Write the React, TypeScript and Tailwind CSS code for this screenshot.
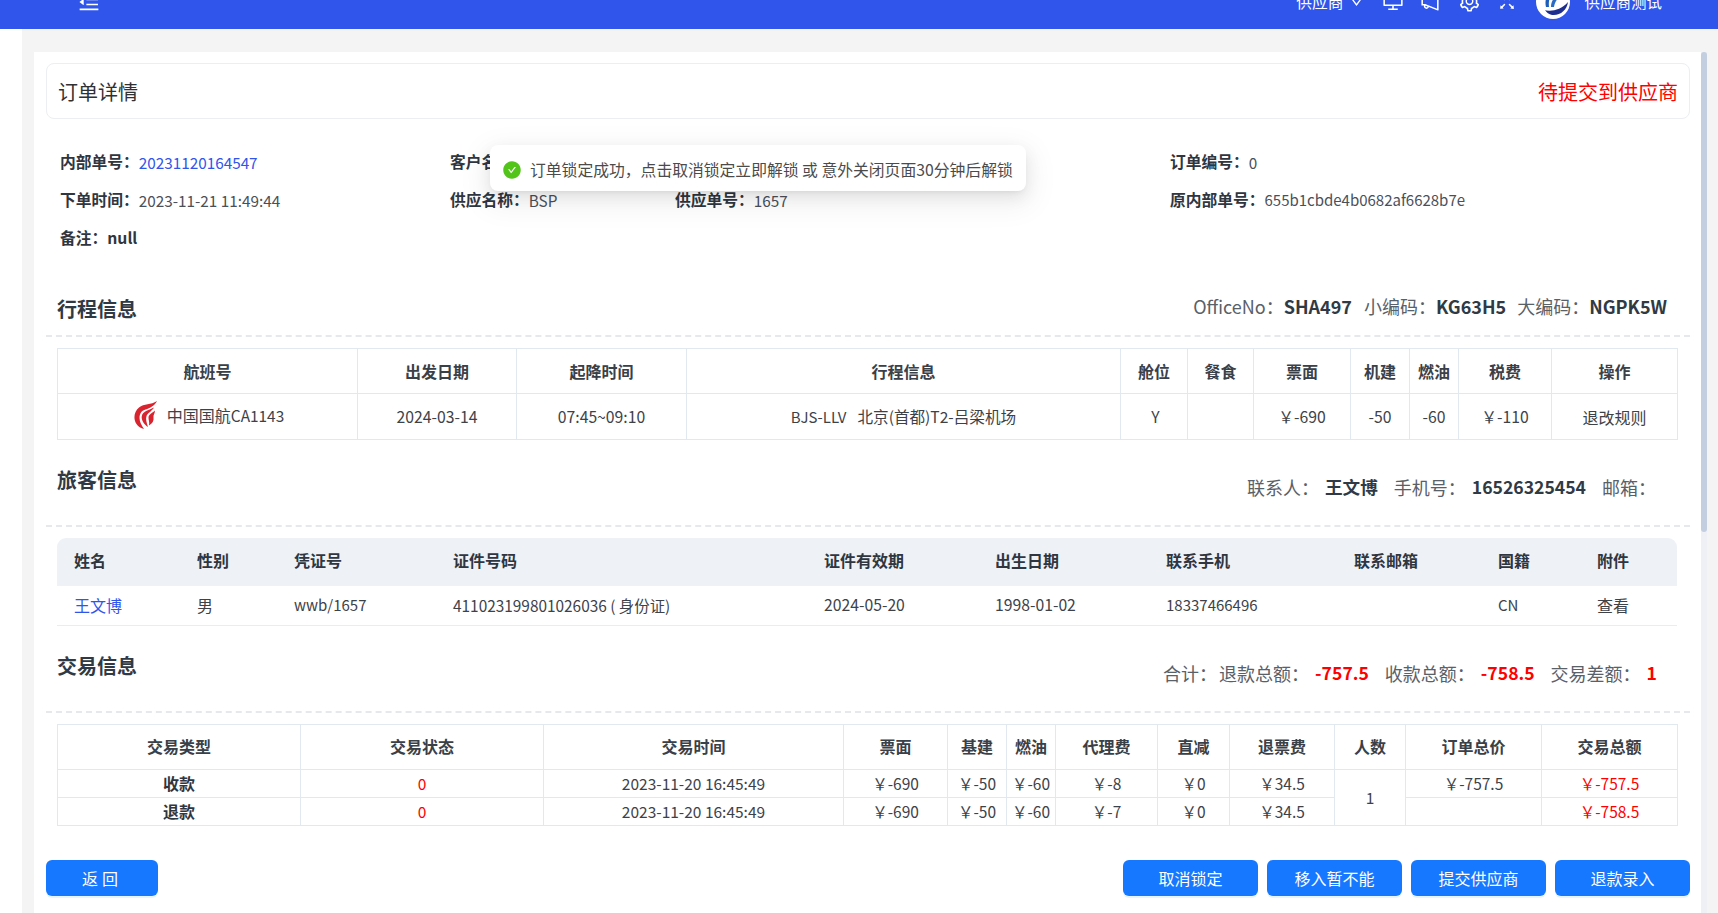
import {
  AiFillCheckCircle,
  AiOutlineDesktop,
  AiOutlineDown,
  AiOutlineFullscreen,
  AiOutlineMenuFold,
  AiOutlineNotification,
  AiOutlineSetting,
} from 'react-icons/ai';

const borderCell = 'border border-[#e2e8f0] text-center font-normal';

function AirChinaLogo() {
  return (
    <svg width="23" height="28" viewBox="0 0 23 28" fill="#d9232e" className="shrink-0">
      <path d="M23 0C17 4 10 2.500 5 6.500C0 10.500 -1 18 2.500 23C4 25.500 7 27.500 10 28C7.500 24 5.500 21 5.500 17C5.500 12 8 9.500 11.500 8.500C16 7 20.500 5 23 0Z" />
      <path d="M20 6.500C14 9.500 9 10 7.800 15C7 19 10 23.500 14 26C12.500 21.500 11.500 18 12.500 15C13.500 12 17.500 10.500 20 6.500Z" />
      <path d="M21 9.500C18 12.500 15 13 14.500 16C14.300 19 15.800 21 15 24.500C18.500 22.500 20 19.500 19.500 16.500C19 14 21 12.500 21 9.500Z" />
    </svg>
  );
}

function AvatarLogo() {
  return (
    <svg width="34" height="34" viewBox="0 0 34 34" className="shrink-0">
      <circle cx="17" cy="17" r="17" fill="#fff" />
      <path d="M10 22C8 14 12 6 20 3C15 8 12 14 13 22Z" fill="#1d5fb8" />
      <path d="M15 22C15 14 21 8 31 8C24 10 19 15 18 22Z" fill="#2a6cc4" />
      <path d="M9 25C15 27 25 25 32 17C31 25 24 31 16 30C13 29.500 10.500 27.500 9 25Z" fill="#1f2f8f" />
      <path d="M8 24C14 26 24 23 33 14" stroke="#fff" strokeWidth="1.500" fill="none" />
    </svg>
  );
}

function TopBar() {
  return (
    <header className="relative z-10 -mt-[26px] flex h-[55px] shrink-0 items-center bg-[#2f55eb] pl-[77px] pr-[56px] text-white">
      <AiOutlineMenuFold size={24} />
      <div className="ml-auto flex items-center">
        <span className="text-[15.75px]">供应商</span>
        <AiOutlineDown size={17} className="ml-[5px]" />
        <AiOutlineDesktop size={22} className="ml-[17px]" />
        <AiOutlineNotification size={22} className="ml-[15px]" />
        <AiOutlineSetting size={23} className="ml-[17px]" />
        <AiOutlineFullscreen size={20} className="ml-[16px]" />
        <div className="ml-[19px]">
          <AvatarLogo />
        </div>
        <span className="ml-[14px] text-[15.5px]">供应商测试</span>
      </div>
    </header>
  );
}

function Field({ label, children }: { label: string; children?: React.ReactNode }) {
  return (
    <div className="flex items-center whitespace-nowrap">
      <span className="text-[15.75px] font-semibold text-[#2f3640]">{label}：</span>
      <span className="text-[15.3px] text-[#4a5059]">{children}</span>
    </div>
  );
}

function SectionHead({ title, className, pad, rightPad, children }: { title: string; className: string; pad: string; rightPad: string; children: React.ReactNode }) {
  return (
    <div className={`flex items-start justify-between border-b-2 border-dashed border-[#e6e8ec] pl-[11px] ${className}`}>
      <h2 className={`text-[20px] leading-[24px] font-semibold text-[#303a45] ${pad}`}>{title}</h2>
      <div className={`flex items-center whitespace-pre text-[18px] leading-[24px] text-[#5a6068] ${rightPad}`}>{children}</div>
    </div>
  );
}

const flightCols = ['w-[300px]', 'w-[159px]', 'w-[170px]', 'w-[434px]', 'w-[67px]', 'w-[66px]', 'w-[97px]', 'w-[59px]', 'w-[49px]', 'w-[93px]', 'w-[126px]'];
const flightHead = ['航班号', '出发日期', '起降时间', '行程信息', '舱位', '餐食', '票面', '机建', '燃油', '税费', '操作'];
const paxCols = ['w-[123px]', 'w-[97px]', 'w-[159px]', 'w-[371px]', 'w-[171px]', 'w-[171px]', 'w-[188px]', 'w-[144px]', 'w-[99px]', 'w-[97px]'];
const paxHead = ['姓名', '性别', '凭证号', '证件号码', '证件有效期', '出生日期', '联系手机', '联系邮箱', '国籍', '附件'];
const payCols = ['w-[243px]', 'w-[243px]', 'w-[300px]', 'w-[104px]', 'w-[59px]', 'w-[49px]', 'w-[102px]', 'w-[72px]', 'w-[105px]', 'w-[71px]', 'w-[136px]', 'w-[136px]'];
const payHead = ['交易类型', '交易状态', '交易时间', '票面', '基建', '燃油', '代理费', '直减', '退票费', '人数', '订单总价', '交易总额'];

const payRows = [
  { type: '收款', fee: '￥-8', total: '￥-757.5', amount: '￥-757.5' },
  { type: '退款', fee: '￥-7', total: '', amount: '￥-758.5' },
];

function FlightTable() {
  return (
    <table className="ml-[11px] w-[1620px] table-fixed border-collapse text-[#3d4249]">
      <colgroup>
        {flightCols.map((c, i) => (
          <col key={i} className={c} />
        ))}
      </colgroup>
      <thead>
        <tr className="h-[45px]">
          {flightHead.map((h) => (
            <th key={h} className={`${borderCell} font-semibold text-[#3a4048]`}>
              {h}
            </th>
          ))}
        </tr>
      </thead>
      <tbody>
        <tr className="h-[46px] text-[15.75px]">
          <td className={borderCell}>
            <div className="-mt-[3px] flex items-center justify-center gap-[10px] pl-[3px]">
              <AirChinaLogo />
              <span className="text-[16px]">
                中国国航<span className="text-[15.4px]">CA1143</span>
              </span>
            </div>
          </td>
          <td className={borderCell}>2024-03-14</td>
          <td className={borderCell}>07:45~09:10</td>
          <td className={borderCell}>
            <span className="text-[15px]">BJS-LLV</span>
            <span className="ml-[11px] text-[15.6px]">北京(首都)T2-吕梁机场</span>
          </td>
          <td className={`${borderCell} pl-[3px]`}>Y</td>
          <td className={borderCell}></td>
          <td className={borderCell}>￥-690</td>
          <td className={borderCell}>-50</td>
          <td className={borderCell}>-60</td>
          <td className={borderCell}>￥-110</td>
          <td className={`${borderCell} text-[16px]`}>退改规则</td>
        </tr>
      </tbody>
    </table>
  );
}

function PassengerTable() {
  return (
    <table className="ml-[11px] w-[1620px] table-fixed border-collapse text-[#3d4249]">
      <colgroup>
        {paxCols.map((c, i) => (
          <col key={i} className={c} />
        ))}
      </colgroup>
      <thead>
        <tr className="h-[48px] bg-[#eef1f6]">
          {paxHead.map((h, i) => (
            <th
              key={h}
              className={`pb-[4px] pl-[17px] text-left font-semibold text-[#2f3640] ${i === 0 ? 'rounded-tl-[9px]' : ''} ${i === 9 ? 'rounded-tr-[9px]' : ''}`}
            >
              {h}
            </th>
          ))}
        </tr>
      </thead>
      <tbody>
        <tr className="h-[39px] border-b border-[#e9edf2] text-[15px] [&>td]:pl-[17px] [&>td]:font-normal">
          <td className="text-[16px] text-[#2f55eb]">王文博</td>
          <td className="text-[16px]">男</td>
          <td>wwb/1657</td>
          <td className="text-[15.4px]">411023199801026036 ( 身份证)</td>
          <td className="text-[15.75px]">2024-05-20</td>
          <td className="text-[15.75px]">1998-01-02</td>
          <td>18337466496</td>
          <td></td>
          <td>CN</td>
          <td className="text-[16px]">查看</td>
        </tr>
      </tbody>
    </table>
  );
}

function PaymentTable() {
  return (
    <table className="ml-[11px] w-[1620px] table-fixed border-collapse text-[#3d4249]">
      <colgroup>
        {payCols.map((c, i) => (
          <col key={i} className={c} />
        ))}
      </colgroup>
      <thead>
        <tr className="h-[45px]">
          {payHead.map((h) => (
            <th key={h} className={`${borderCell} pb-[2px] font-semibold text-[#3a4048]`}>
              {h}
            </th>
          ))}
        </tr>
      </thead>
      <tbody>
        {payRows.map((r, i) => (
          <tr key={r.type} className="h-[28px] text-[15.5px] leading-[20px]">
            <td className={`${borderCell} p-0 text-[16px] font-semibold text-[#2f3640]`}>{r.type}</td>
            <td className={`${borderCell} p-0 text-[#ff0000]`}>0</td>
            <td className={`${borderCell} p-0`}>2023-11-20 16:45:49</td>
            <td className={`${borderCell} p-0`}>￥-690</td>
            <td className={`${borderCell} p-0`}>￥-50</td>
            <td className={`${borderCell} p-0`}>￥-60</td>
            <td className={`${borderCell} p-0`}>{r.fee}</td>
            <td className={`${borderCell} p-0`}>￥0</td>
            <td className={`${borderCell} p-0`}>￥34.5</td>
            {i === 0 && (
              <td rowSpan={2} className={`${borderCell} p-0`}>
                1
              </td>
            )}
            <td className={`${borderCell} p-0`}>{r.total}</td>
            <td className={`${borderCell} p-0 text-[#ff0000]`}>{r.amount}</td>
          </tr>
        ))}
      </tbody>
    </table>
  );
}

function ActionButton({ children, className }: { children: React.ReactNode; className: string }) {
  return (
    <button className={`h-[36px] rounded-[6px] bg-[#1677ff] text-[16px] text-white shadow-[0_2px_0_rgba(5,145,255,0.1)] ${className}`}>
      {children}
    </button>
  );
}

function Bold({ children, red }: { children: React.ReactNode; red?: boolean }) {
  return <b className={`ml-[6px] mr-[16px] text-[17.6px] font-bold ${red ? 'text-[#ff0000]' : 'text-[#303a45]'}`}>{children}</b>;
}

export default function App() {
  return (
    <div
      className="relative flex h-screen flex-col overflow-hidden bg-white text-[16px] text-[#3d4249]"
      style={{ fontFamily: '"Noto Sans CJK SC", "Noto Sans", sans-serif' }}
    >
      <TopBar />

      <div className="flex min-h-0 flex-1">
        <aside className="w-[22px] shrink-0 bg-white" />
        <main className="flex min-w-0 flex-1 bg-[#f4f4f4] pl-[12px] pr-[11px] pt-[23px]">
          <div className="min-w-0 flex-1 bg-white pl-[12px] pr-[11px] pt-[11px]">
            <div className="flex h-[56px] items-center justify-between rounded-[8px] border border-[#eceef1] pl-[11px] pr-[11px] pt-[2px] text-[20px]">
              <span className="text-[#303133]">订单详情</span>
              <span className="text-[#ff0000]">待提交到供应商</span>
            </div>

            <div className="mt-[24px] grid auto-rows-[38px] grid-cols-[390px_225px_495px_1fr] pl-[14px]">
              <Field label="内部单号">
                <span className="text-[#2f55eb]">20231120164547</span>
              </Field>
              <Field label="客户名称" />
              <div />
              <Field label="订单编号">0</Field>
              <Field label="下单时间">2023-11-21 11:49:44</Field>
              <Field label="供应名称">BSP</Field>
              <Field label="供应单号">1657</Field>
              <Field label="原内部单号">
                <span className="text-[15px]">655b1cbde4b0682af6628b7e</span>
              </Field>
              <div className="flex items-center text-[15.75px] font-semibold text-[#2f3640]">备注：null</div>
            </div>

            <SectionHead title="行程信息" className="h-[80px]" pad="pt-[40px]" rightPad="pt-[37px] pr-[23px]">
              OfficeNo：<b className="text-[18px] font-bold text-[#303a45]">SHA497</b>
              <span className="ml-[12px]">小编码：</span>
              <b className="text-[18px] font-bold text-[#303a45]">KG63H5</b>
              <span className="ml-[11px]">大编码：</span>
              <b className="text-[18px] font-bold text-[#303a45]">NGPK5W</b>
            </SectionHead>
            <div className="mt-[11px]">
              <FlightTable />
            </div>

            <SectionHead title="旅客信息" className="h-[87px]" pad="pt-[28px]" rightPad="pt-[35px] pr-[34px]">
              联系人：<Bold>王文博</Bold>手机号：<Bold>16526325454</Bold>邮箱：
            </SectionHead>
            <div className="mt-[11px]">
              <PassengerTable />
            </div>

            <SectionHead title="交易信息" className="h-[87px]" pad="pt-[28px]" rightPad="pt-[35px] pr-[17px]">
              合计：<span className="ml-[2px]">退款总额：</span>
              <Bold red>-757.5</Bold>收款总额：<Bold red>-758.5</Bold>交易差额：<Bold red>1</Bold>
            </SectionHead>
            <div className="mt-[11px]">
              <PaymentTable />
            </div>

            <div className="mt-[34px] flex">
              <ActionButton className="w-[112px] tracking-[4px]">返回</ActionButton>
              <div className="ml-auto flex gap-[9px]">
                <ActionButton className="w-[135px]">取消锁定</ActionButton>
                <ActionButton className="w-[135px]">移入暂不能</ActionButton>
                <ActionButton className="w-[135px]">提交供应商</ActionButton>
                <ActionButton className="w-[135px]">退款录入</ActionButton>
              </div>
            </div>
          </div>

          <div className="w-[6px] shrink-0 bg-[#eef0f5]">
            <div className="h-[480px] rounded-[3px] bg-[#c3cfe0]" />
          </div>
        </main>
      </div>

      <div className="absolute left-[490px] top-[145px] flex h-[46px] w-[536px] items-center rounded-[8px] bg-white pl-[12px] pt-[3px] text-[15.8px] whitespace-pre text-[#4b4b4b] shadow-[0_6px_16px_0_rgba(0,0,0,0.08),0_3px_6px_-4px_rgba(0,0,0,0.12),0_9px_28px_8px_rgba(0,0,0,0.05)]">
        <AiFillCheckCircle size={20} className="text-[#52c41a]" />
        <span className="ml-[8px]">订单锁定成功，点击取消锁定立即解锁 或 意外关闭页面30分钟后解锁</span>
      </div>
    </div>
  );
}
